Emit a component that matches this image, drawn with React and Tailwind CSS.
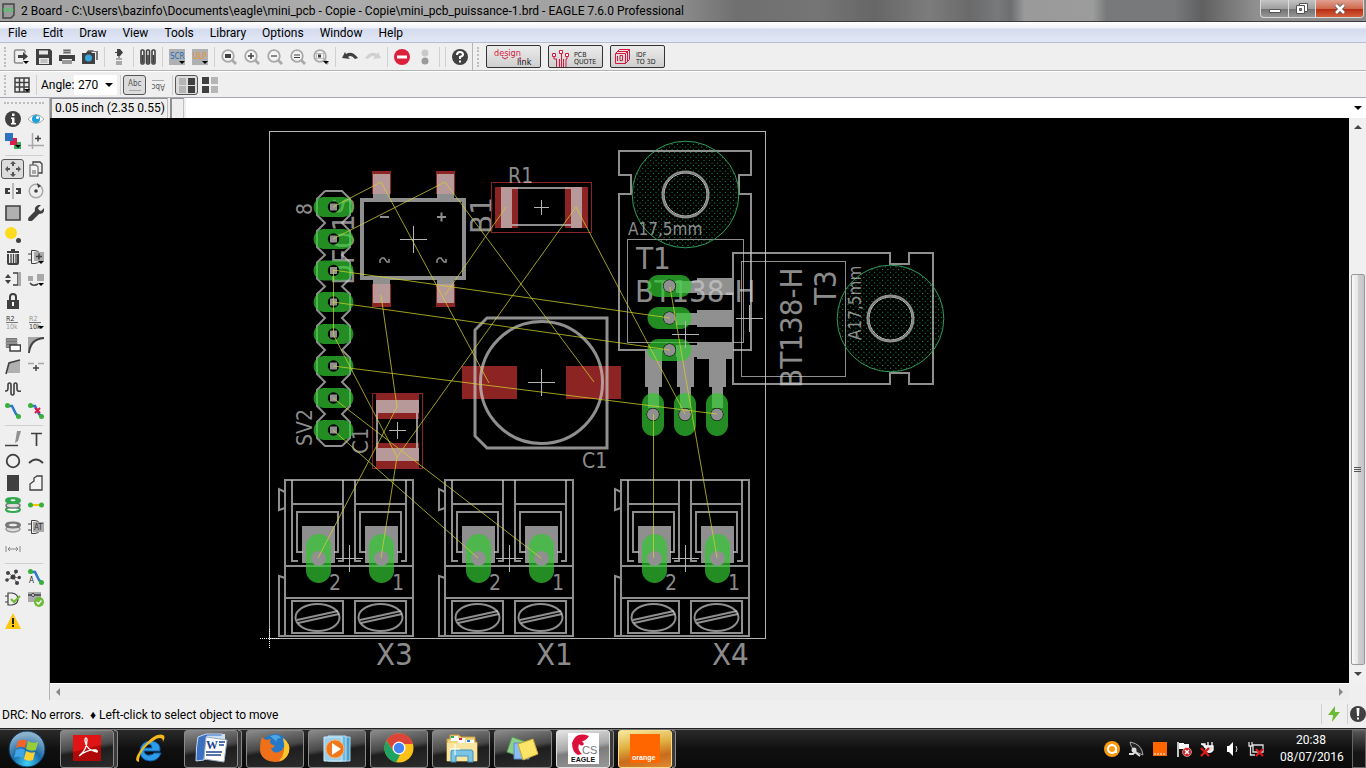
const uiFont = "font-['Roboto','Open_Sans',sans-serif] text-[12px] text-black";

const menus = ['File', 'Edit', 'Draw', 'View', 'Tools', 'Library', 'Options', 'Window', 'Help'];

const D = '#404040';
const G = '#a8a8a8';
const condensed = "'DejaVu Sans Condensed', 'DejaVu Sans', sans-serif";

const Lens = ({ children }) => (
  <>
    <path d="M11 11l4 4" stroke={G} strokeWidth="2.6" />
    <circle cx="7" cy="7" r="5.8" fill="#f4f4f4" stroke={G} strokeWidth="1.8" />
    {children}
  </>
);

const DropMark = () => <path d="M10 12h6l-3 3z" fill="#000" />;

const icons = {
  open: (
    <>
      <path d="M12 4V2.500Q12 1 10.500 1H3Q1.500 1 1.500 2.500v10Q1.500 14 3 14h7" fill="none" stroke="#8a8a8a" strokeWidth="1.500" />
      <path d="M5 6h5V3l5 4.500-5 4V9H5z" fill={D} />
      <DropMark />
    </>
  ),
  save: (
    <>
      <path d="M0 0h14l2 2v14H0z" fill={D} />
      <path d="M3 1.500h9v4H3zM3 9h10v6H3z" fill="#e8e8e8" />
      <path d="M4.500 11h7M4.500 13h7" stroke="#999" />
    </>
  ),
  print: (
    <>
      <path d="M4 0h8v5H4z" fill="#aaa" />
      <path d="M5 1.500h6M5 3.500h6" stroke="#666" />
      <path d="M0 6h16v6h-3v-2H3v2H0z" fill={D} />
      <path d="M3 11h10v4H3z" fill="#999" />
    </>
  ),
  camera: (
    <>
      <path d="M5 3l1-2h5l1 1h4v9h-2V3z" fill="#777" />
      <path d="M0 4h4l1-1.500h4L10 4h3v11H0z" fill={D} />
      <circle cx="6.500" cy="9" r="3.500" fill="#35a7e0" />
    </>
  ),
  plug: (
    <>
      <path d="M6 0v7h3l3-3.500L9 0z" fill={D} />
      <path d="M4 3.500h3M8 6v3" stroke={D} />
      <path d="M5 9h6v2H5zM5 12h6v4H5z" fill={G} />
    </>
  ),
  books: (
    <g fill="#f2f2f2" stroke={D} strokeWidth="1.600">
      <rect x="1" y="1" width="3" height="14" rx="1" />
      <rect x="6.500" y="1" width="3" height="14" rx="1" />
      <rect x="12" y="1" width="3" height="14" rx="1" />
      <path d="M2.500 6v8M8 6v8M13.500 6v8" />
    </g>
  ),
  scr: (
    <>
      <path d="M0 0h16v16H0z" fill="#aeb0b2" />
      <text x="1" y="10" fontSize="8" fontFamily={condensed} fill="#1f6cba">SCR</text>
      <DropMark />
    </>
  ),
  ulp: (
    <>
      <path d="M0 0h16v16H0z" fill="#aeb0b2" />
      <text x="1" y="10" fontSize="8" fontFamily={condensed} fill="#f0901c">ULP</text>
      <DropMark />
    </>
  ),
  zoomFit: <Lens><path d="M4 5h6v4H4z" fill={D} /></Lens>,
  zoomIn: <Lens><path d="M4 7h6M7 4v6" stroke={D} strokeWidth="1.500" /></Lens>,
  zoomOut: <Lens><path d="M4 7h6" stroke={D} strokeWidth="1.200" /></Lens>,
  zoomRedraw: <Lens><path d="M4 6h6M4 8.500h6" stroke={D} /></Lens>,
  zoomSelect: <Lens><path d="M3.500 4.500h7v5h-7z" fill="none" stroke="#888" strokeDasharray="1 1" /><path d="M5 5.500h3v3H5z" fill={D} /><DropMark /></Lens>,
  undo: <path d="M0 9L3 3l1 2q6-4 12 4l-3 1q-4-5-7-2l2 2z" fill={D} />,
  redo: <path d="M16 9l-3-6-1 2Q6 1 0 9l3 1q4-5 7-2l-2 2z" fill="#d0d0d0" />,
  stop: (
    <>
      <circle cx="8" cy="8" r="8" fill="#dc1f3c" />
      <path d="M3 6.500h10v3H3z" fill="#fff" />
    </>
  ),
  light: (
    <>
      <circle cx="8" cy="4" r="3.500" fill="#c9c9c9" />
      <circle cx="8" cy="12" r="3.500" fill="#9a9a9a" />
    </>
  ),
  help: (
    <>
      <circle cx="8" cy="8" r="8" fill={D} />
      <path d="M5 6q0-3 3-3t3 2.500Q11 7 8 8v2" fill="none" stroke="#fff" strokeWidth="2" />
      <path d="M7 11.500h2v2H7z" fill="#fff" />
    </>
  ),
  grid: (
    <>
      <path d="M1 1h14v14H1zM1 5.500h14M1 10h14M5.500 1v14M10 1v14" fill="none" stroke={D} strokeWidth="1.500" />
      <DropMark />
    </>
  ),
  abc: (
    <>
      <text x="1" y="9" fontSize="8" fontFamily={condensed} fill="#555">Abc</text>
      <path d="M2 13.500h12" stroke={G} />
    </>
  ),
  abcFlip: (
    <>
      <text x="1" y="9" fontSize="8" fontFamily={condensed} fill="#555" transform="rotate(180 8 8)">Abc</text>
      <path d="M2 3.500h12" stroke={G} />
    </>
  ),
  quadA: (
    <>
      <path d="M0 1h7v7H0zM0 9h7v7H0z" fill="#b5b5b5" />
      <path d="M9 1h7v7H9zM9 9h7v7H9z" fill={D} />
    </>
  ),
  quadB: (
    <>
      <path d="M9 0h7v7H9zM9 9h7v7H9z" fill="#b5b5b5" />
      <path d="M0 0h7v7H0zM0 9h7v7H0z" fill={D} />
    </>
  ),
  info: (
    <>
      <circle cx="8" cy="8" r="8" fill={D} />
      <path d="M7 2.500h2.500v2.500H7zM6 6.500h3.500V12H11v1.500H6V12h1V8H6z" fill="#fff" />
    </>
  ),
  eye: (
    <>
      <path d="M0 8q8-9 16 0-8 9-16 0z" fill="#fff" stroke={G} />
      <circle cx="8" cy="8" r="4" fill="#1da0dc" />
      <circle cx="9.500" cy="6.500" r="1.500" fill="#fff" />
    </>
  ),
  layers: (
    <>
      <path d="M9 9h7v7H9z" fill="#3aaf5a" />
      <path d="M5 5h7v7H5z" fill="#d81e4a" />
      <path d="M0 0h8v8H0z" fill="#2d72bd" />
      <DropMark />
    </>
  ),
  mark: (
    <>
      <path d="M4.500 0v16M0 12.500h16" stroke={G} strokeWidth="1.500" />
      <path d="M7 5.500h6M10 2.500v6" stroke={D} strokeWidth="1.500" />
    </>
  ),
  move: <path d="M8 0l3 3H9v2H7V3H5zM8 16l3-3H9v-2H7v2H5zM0 8l3-3v2h2v2H3v2zM16 8l-3-3v2h-2v2h2v2z" fill="#555" />,
  copy: (
    <>
      <path d="M5 1h7l2 2v9H5z" fill="#eee" stroke={D} strokeWidth="1.300" />
      <path d="M2 4h6l2 2v9H2z" fill="#f4f4f4" stroke="#777" strokeWidth="1.300" />
      <path d="M4 9h4v4H4z" fill={G} />
    </>
  ),
  mirror: (
    <>
      <path d="M8 0v16" stroke={G} strokeWidth="1.500" />
      <path d="M0 5h5v6H0zM11 5h5v6h-5z" fill={D} />
      <path d="M3 7h2v2H3zM11 7h2v2h-2z" fill="#eee" />
    </>
  ),
  rotate: (
    <>
      <circle cx="8" cy="8" r="6.800" fill="none" stroke={G} strokeWidth="1.500" />
      <circle cx="8" cy="8" r="1.800" fill={D} />
      <path d="M9 0l4 3-3 2z" fill={D} />
    </>
  ),
  group: <path d="M1 1h14v14H1z" fill="#b0b0b0" stroke={D} strokeWidth="1.600" />,
  wrench: <path d="M10 0q3-1 3 0l-3 3 1 2 2 1 3-3q1 6-5 6l-6 6q-3 3-5 0 0-2 1-3l6-6q-1-4 3-6z" fill={D} />,
  paste: (
    <>
      <circle cx="6" cy="6" r="6" fill="#fddb1e" />
      <circle cx="13.500" cy="13.500" r="2.500" fill={D} />
    </>
  ),
  trash: (
    <>
      <path d="M2 3h12M6 1h4M3 5v9q0 1 1 1h8q1 0 1-1V5" fill="none" stroke={D} strokeWidth="2" />
      <path d="M6 5v9M8.500 5v9M11 5v9" stroke={D} strokeWidth="1.300" />
    </>
  ),
  add: (
    <>
      <path d="M3.500 1.500H7q6 1 6 6.500t-6 6.500H3.500zM0 5h3M0 11h3" fill="#eee" stroke={D} />
      <path d="M6 3h10v9H6z" fill="#aaa" />
      <path d="M8 7.500h6M11 4.500v6" stroke={D} strokeWidth="1.500" />
      <DropMark />
    </>
  ),
  pinswap: (
    <>
      <path d="M0 7l3-4 3 4zM0 9l3 4 3-4z" fill={D} />
      <path d="M8 2h5v12H8" fill="none" stroke={D} strokeWidth="1.500" />
      <path d="M13 1h3v14h-3z" fill={G} />
    </>
  ),
  replace: (
    <>
      <path d="M0 5h5v5H0zM9 3h7v7H9z" fill={G} />
      <path d="M2 12q3 4 8 1" fill="none" stroke={D} strokeWidth="1.500" />
      <DropMark />
    </>
  ),
  lock: (
    <>
      <path d="M5 8V4q0-3 3-3t3 3v4" fill="none" stroke={D} strokeWidth="2" />
      <path d="M2 7h12v9H2z" fill={D} />
      <path d="M7 9h2v4H7z" fill="#fff" />
    </>
  ),
  name: (
    <>
      <text x="1" y="6" fontSize="7" fontFamily={condensed} fill="#333">R2</text>
      <path d="M1 7.500h12" stroke="#777" />
      <text x="1" y="14" fontSize="7" fontFamily={condensed} fill="#999">10k</text>
    </>
  ),
  value: (
    <>
      <text x="1" y="6" fontSize="7" fontFamily={condensed} fill="#999">R2</text>
      <path d="M1 7.500h12" stroke="#777" />
      <text x="1" y="14" fontSize="7" fontFamily={condensed} fill="#333">10k</text>
      <path d="M10 11h6l-3 3z" fill="#000" />
    </>
  ),
  smash: (
    <>
      <path d="M1 1h11v10H1z" fill="#777" />
      <path d="M0 3h13M0 6h13M0 9h13" stroke="#aaa" />
      <path d="M5 8h10.500v6H5z" fill="#fff" stroke={D} strokeWidth="1.500" />
    </>
  ),
  miter: (
    <>
      <path d="M0 0h16L6 5 1 16H0z" fill={G} />
      <path d="M1 16Q2 2 16 1" fill="none" stroke={D} strokeWidth="1.800" />
    </>
  ),
  split: (
    <>
      <path d="M4 4l11-2v12H2z" fill="#b0b0b0" />
      <path d="M1 15L4 4l11-3" fill="none" stroke={D} strokeWidth="1.600" />
    </>
  ),
  optimize: (
    <>
      <path d="M0 4.500h6M10 4.500h6" stroke={G} strokeWidth="1.500" />
      <path d="M5 9h6M8 6v6" stroke={D} strokeWidth="1.400" />
    </>
  ),
  meander: <path d="M0 10h1q2 0 2-3V4q0-2 1.500-2T6 4v8q0 2 1.500 2T9 12V4q0-2 1.500-2T12 4v4q0 3 4 2" fill="none" stroke={D} strokeWidth="1.600" />,
  route: (
    <>
      <path d="M2 3h5l4 8 3 3" fill="none" stroke="#2d78c4" strokeWidth="2.500" />
      <circle cx="2.500" cy="2.500" r="2.500" fill="#3aaf3a" />
      <circle cx="13.500" cy="13.500" r="2.500" fill="#3aaf3a" />
    </>
  ),
  ripup: (
    <>
      <path d="M2 3h5l4 8 3 3" fill="none" stroke="#2d78c4" strokeWidth="2.500" />
      <circle cx="2.500" cy="2.500" r="2.500" fill="#3aaf3a" />
      <circle cx="13.500" cy="13.500" r="2.500" fill="#3aaf3a" />
      <path d="M7 5l5 5M12 5L7 10" stroke="#e01840" strokeWidth="2" />
    </>
  ),
  line: (
    <>
      <path d="M0 14.500h13" stroke={D} strokeWidth="1.500" />
      <path d="M12 0h4l-3 10-3 2z" fill="#909090" />
    </>
  ),
  text: <path d="M3 2.500h11M8.500 2.500V15" stroke={D} strokeWidth="1.700" />,
  circle: <circle cx="8" cy="8" r="6.300" fill="none" stroke={D} strokeWidth="1.800" />,
  arc: <path d="M1 10q7-7 14 0" fill="none" stroke={D} strokeWidth="2" />,
  rect: <path d="M2 0h12v16H2z" fill={D} />,
  polygon: <path d="M2 15V9l4-3V3l3-2h5v14z" fill="#f4f4f4" stroke={D} strokeWidth="1.300" />,
  via: (
    <>
      <ellipse cx="8" cy="12.500" rx="7" ry="2.500" fill="#fff" stroke="#2fa84f" strokeWidth="2" />
      <ellipse cx="8" cy="8.500" rx="7" ry="2.500" fill="#ddd" stroke="#777" strokeWidth="1.500" />
      <ellipse cx="8" cy="3.500" rx="7" ry="2.500" fill="#2fa84f" stroke="#2fa84f" strokeWidth="2" />
      <ellipse cx="8" cy="3.300" rx="2.500" ry="1" fill="#e8f6ea" />
    </>
  ),
  signal: (
    <>
      <path d="M3 8h10" stroke="#f5c800" strokeWidth="2" />
      <circle cx="2.500" cy="8" r="2.500" fill="#3aaf3a" />
      <circle cx="13.500" cy="8" r="2.500" fill="#3aaf3a" />
    </>
  ),
  hole: (
    <>
      <ellipse cx="8" cy="10" rx="7" ry="3" fill="#ddd" stroke="#999" strokeWidth="1.500" />
      <ellipse cx="8" cy="6" rx="7" ry="2.500" fill="#888" stroke="#777" strokeWidth="2" />
      <ellipse cx="8" cy="6" rx="4" ry="1.200" fill="#eee" />
    </>
  ),
  attribute: (
    <>
      <path d="M3.500 1.500H7q6 1 6 6.500t-6 6.500H3.500zM0 5h3M0 11h3" fill="#eee" stroke={D} />
      <path d="M5 3h11v10H5z" fill="#aaa" />
      <text x="6" y="11" fontSize="8" fontFamily={condensed} fill="#333">AT</text>
    </>
  ),
  dimension: <path d="M1 5v6M15 5v6M4 8h8M5 6L3 8l2 2M11 6l2 2-2 2" fill="none" stroke="#888" />,
  ratsnest: (
    <>
      <path d="M8 8L3 3M8 8l4-6M8 8l7 1M8 8L2 11M8 8l4 6" stroke="#888" />
      <g fill={D}>
        <circle cx="8" cy="8" r="2.500" />
        <circle cx="3" cy="4" r="2" />
        <circle cx="11" cy="2.500" r="2" />
        <circle cx="14.300" cy="8.500" r="1.700" />
        <circle cx="2" cy="11" r="1.800" />
        <circle cx="12" cy="14" r="2" />
      </g>
    </>
  ),
  auto: (
    <>
      <path d="M2 3h5l4 8 3 3" fill="none" stroke="#2d78c4" strokeWidth="2.500" />
      <circle cx="2.500" cy="2.500" r="2.500" fill="#3aaf3a" />
      <circle cx="13.500" cy="13.500" r="2.500" fill="#3aaf3a" />
      <text x="1" y="14" fontSize="8" fontFamily={condensed} fill="#222">A</text>
    </>
  ),
  erc: (
    <>
      <path d="M3 2h4q6 1 6 6t-6 6H3zM0 5h3M0 11h3" fill="none" stroke={D} strokeWidth="1.200" />
      <path d="M6 8l3 3 6-6" fill="none" stroke="#6cba35" strokeWidth="2.200" />
    </>
  ),
  drc: (
    <>
      <path d="M0 1h13v10H0z" fill="#aaa" />
      <path d="M0 4h13" stroke={D} strokeWidth="1.500" />
      <circle cx="5" cy="4" r="1.500" fill="#eee" stroke={D} />
      <circle cx="11" cy="11" r="5" fill="#6cba35" />
      <path d="M8.500 11l2 2 3-3.500" fill="none" stroke="#fff" strokeWidth="1.500" />
    </>
  ),
  warning: (
    <>
      <path d="M8 0l8 16H0z" fill="#ffc814" />
      <path d="M7 5h2v6H7zM7 12h2v2H7z" fill="#222" />
    </>
  ),
};

const sidebar = [
  ['info', 'eye'],
  ['layers', 'mark'],
  null,
  ['move', 'copy'],
  ['mirror', 'rotate'],
  ['group', 'wrench'],
  ['paste'],
  ['trash', 'add'],
  ['pinswap', 'replace'],
  ['lock'],
  ['name', 'value'],
  ['smash', 'miter'],
  ['split', 'optimize'],
  ['meander'],
  ['route', 'ripup'],
  null,
  ['line', 'text'],
  ['circle', 'arc'],
  ['rect', 'polygon'],
  ['via', 'signal'],
  ['hole', 'attribute'],
  ['dimension'],
  null,
  ['ratsnest', 'auto'],
  ['erc', 'drc'],
  ['warning'],
];

const toolbar = [
  'open', 'save', 'print', 'camera', null, 'plug', null, 'books', null, 'scr', 'ulp', null,
  'zoomFit', 'zoomIn', 'zoomOut', 'zoomRedraw', 'zoomSelect', null, 'undo', 'redo', null,
  'stop', 'light', null, null, 'help',
];

const Tool = ({ name, pressed }) => (
  <button
    type="button"
    aria-label={name}
    className={`flex w-[23px] shrink-0 items-center justify-center ${pressed ? 'h-5 rounded-[3px] border border-[#555] bg-[#dcdcdc]' : 'h-[22px]'}`}
  >
    <svg viewBox="0 0 16 16" className="size-4 shrink-0">{icons[name]}</svg>
  </button>
);

const Sep = () => (
  <div className="flex h-5 w-[6px] shrink-0 justify-center">
    <div className="w-px bg-[#cfcfcf]" />
  </div>
);

const Grip = () => <div className="mx-1 h-5 w-0 shrink-0 border-l-2 border-dotted border-[#bdbdbd]" />;

const TitleBar = () => (
  <header className="flex h-[22px] shrink-0 items-start justify-between border-b border-[#3c3c3c] bg-[linear-gradient(90deg,#a2a2a2_0%,#ababab_25%,#a0a0a0_45%,#8a8a8a_50%,#6f6f6f_54%,#757575_60%,#666_64%,#7c7c7c_68%,#6a6a6a_71%,#77797b_73%,#6c6e70_74%,#9a9a9a_75%,#9c9c9c_80%,#77797b_81%,#77797b_86%,#606060_88%,#909090_92%,#8a8a8a_100%)]">
    <div className="flex min-w-0 items-center pt-[2px] pl-[2px]">
      <svg viewBox="0 0 13 16" className="mr-[6px] h-4 w-[13px] shrink-0">
        <path d="M1 1h11v11l-3 3H1z" fill="#9a9a9a" stroke="#444" strokeWidth="1.500" />
        <text x="1" y="9" fontSize="5" fontFamily="'Liberation Sans', sans-serif" fill="#2fd84f">BRD</text>
      </svg>
      <h1 className="truncate text-[12px] leading-[18px]">
        2 Board - C:\Users\bazinfo\Documents\eagle\mini_pcb - Copie - Copie\mini_pcb_puissance-1.brd - EAGLE 7.6.0 Professional
      </h1>
    </div>
    <div className="mr-[2px] flex h-[18px] shrink-0 overflow-hidden rounded-b border border-t-0 border-[#d8d8d8] bg-[linear-gradient(#c4c4c4,#a0a0a0_50%,#707070_51%,#969696)]">
      <button type="button" aria-label="Minimize" className="flex w-7 items-center justify-center border-r border-[#ddd]">
        <svg viewBox="0 0 12 12" className="size-3"><path d="M.5 6.500h11v3H.500z" fill="#fff" stroke="#555" /></svg>
      </button>
      <button type="button" aria-label="Restore" className="flex w-[27px] items-center justify-center border-r border-[#ddd]">
        <svg viewBox="0 0 12 12" className="size-3">
          <path d="M3.500.5h8v8h-8z" fill="#fff" stroke="#555" />
          <path d="M.5 2.500h8v8h-8z" fill="#fff" stroke="#555" />
          <path d="M3.500 5.500h2v2h-2z" fill="#888" stroke="#555" />
        </svg>
      </button>
      <button type="button" aria-label="Close" className="flex w-[47px] items-center justify-center bg-[linear-gradient(#e0a090,#cf6a50_50%,#b52a10_51%,#d4603c)]">
        <svg viewBox="0 0 12 12" className="size-3">
          <path d="M2 2l8 8M10 2l-8 8" stroke="#555" strokeWidth="4.500" />
          <path d="M2 2l8 8M10 2l-8 8" stroke="#fff" strokeWidth="2.600" />
        </svg>
      </button>
    </div>
  </header>
);

const LinkButton = ({ label, children }) => (
  <button type="button" aria-label={label} className="h-[23px] w-[55px] shrink-0 rounded-[2px] border border-[#333] bg-[linear-gradient(#ececec,#cfcfcf)]">
    <svg viewBox="0 0 53 21" className="h-[21px] w-[53px]">{children}</svg>
  </button>
);

const Toolbars = () => (
  <>
    <div className="flex h-[28px] shrink-0 items-center border-b border-[#b4b4b4]">
      <Grip />
      <div className="-ml-px flex items-center">
        {toolbar.map((name, i) => (name ? <Tool key={i} name={name} /> : <Sep key={i} />))}
      </div>
      <div className="ml-px h-full w-px bg-[#b4b4b4]" />
      <Grip />
      <div className="flex gap-[7px] pl-[3px]">
        <LinkButton label="Design link">
          <g fontFamily={condensed} fontSize="9">
            <text x="7" y="10" fill="#d8173e">design</text>
            <text x="30" y="19" fill="#111">link</text>
          </g>
          <path d="M15 11l3 2 3-2M33 11v5" fill="none" stroke="#d8173e" />
        </LinkButton>
        <LinkButton label="PCB quote">
          <path d="M5 11v2h2.500v8M10.500 21v-8M12.500 21V7M14.500 21v-8M18 11v2h-1v8" fill="none" stroke="#d8173e" />
          <path d="M3.500 7.500h3v3h-3zM10.500 4.500h3v3h-3zM16.500 7.500h3v3h-3z" fill="#fff" stroke="#d8173e" />
          <g fontFamily={condensed} fontSize="7" fill="#222">
            <text x="25" y="11">PCB</text>
            <text x="25" y="18">QUOTE</text>
          </g>
        </LinkButton>
        <LinkButton label="IDF to 3D">
          <path d="M4.500 7.500l4-4h10v10l-4 4h-10zM4.500 7.500h10v10M14.500 7.500l4-4" fill="none" stroke="#d8173e" />
          <path d="M6.500 10v5M9 14.500v-5h2.500v5zM7 5.500h9.500v10" fill="none" stroke="#d8173e" />
          <g fontFamily={condensed} fontSize="7" fill="#222">
            <text x="25" y="11">IDF</text>
            <text x="25" y="18">TO 3D</text>
          </g>
        </LinkButton>
      </div>
    </div>
    <div className="flex h-[27px] shrink-0 items-center border-t border-b border-t-white border-b-[#a8a8b0]">
      <Grip />
      <Tool name="grid" />
      <Sep />
      <label htmlFor="angle" className="w-[35px] pl-[2px] whitespace-nowrap">Angle:</label>
      <div className="relative">
        <select id="angle" defaultValue="270" className="h-5 w-[43px] appearance-none bg-white pl-1 outline-none">
          <option>270</option>
          <option>180</option>
          <option>90</option>
          <option>0</option>
        </select>
        <svg viewBox="0 0 8 4" className="pointer-events-none absolute top-2 right-1 h-1 w-2"><path d="M0 0h8L4 4z" /></svg>
      </div>
      <Sep />
      <Tool name="abc" pressed />
      <Tool name="abcFlip" />
      <Sep />
      <Tool name="quadA" pressed />
      <Tool name="quadB" />
    </div>
  </>
);

const Sidebar = () => (
  <aside className="w-[50px] shrink-0 border-r border-[#b4b4b4] pr-[2px] pl-px">
    <div className="mx-[3px] mt-1 mb-1 border-t-2 border-dotted border-[#bdbdbd]" />
    {sidebar.map((row, i) =>
      row ? (
        <div key={i} className="flex h-[22px] items-center">
          {row.map((name) => <Tool key={name} name={name} pressed={name === 'move'} />)}
        </div>
      ) : (
        <div key={i} className="mx-1 flex h-[6px] items-center"><div className="h-px w-full bg-[#cfcfcf]" /></div>
      )
    )}
  </aside>
);

// board layer colours, all drawn slightly translucent so that overlaps show
const A = 0.706;
const GRAY = '#cbcbcb';
const RED = '#c63333';
const GREEN = '#32c632';
const line = { fill: 'none', stroke: GRAY, strokeOpacity: A, strokeWidth: 2 };
const gray = { fill: GRAY, fillOpacity: A };
const red = { fill: RED, fillOpacity: A };

const Cross = ({ x, y, r = 13 }) => (
  <path d={`M${x - r} ${y + 0.5}h${2 * r + 1}M${x + 0.5} ${y - r}v${2 * r + 1}`} fill="none" stroke="#b4b4b4" />
);

const Label = ({ x, y, size, up, children }) => (
  <text x={x} y={y} fontSize={size} transform={up ? `rotate(-90 ${x} ${y})` : undefined} {...gray}>
    {children}
  </text>
);

const Pad = ({ x, y, w, h, hole }) => (
  <>
    <rect x={x - w / 2} y={y - h / 2} width={w} height={h} rx={Math.min(w, h) / 2} fill={GREEN} fillOpacity={A} />
    {hole === 'square' ? (
      <>
        <circle cx={x} cy={y} r="5.700" fill="#000" />
        <rect x={x - 3.5} y={y - 3.5} width="7" height="7" {...gray} />
      </>
    ) : (
      <>
        {hole === 'ring' && <circle cx={x} cy={y} r="6.500" fill="#000" />}
        <circle cx={x} cy={y} r={hole === 'ring' ? 6 : 7.5} fill="#909090" />
      </>
    )}
  </>
);

const headerY = [207, 239, 270.5, 302, 334, 366, 398, 430];

const headerOutline = () => {
  const left = headerY.map((y) => `L317 ${y - 8}V${y + 8}L325 ${y + 16}`).join('');
  const right = headerY.map((y) => `L350 ${y - 8}V${y + 8}L342 ${y + 16}`).join('');
  return `M325 191${left}H342M325 191H342${right}`;
};

const Terminal = ({ dx, name }) => (
  <g transform={`translate(${dx} 0)`}>
    <path d="M285 480H413V636H285zM285 566H413M285 598H413M285 492L279 489V510L285 508M285 578L279 576V636H285" {...line} />
    {[0, 63].map((d) => (
      <g key={d} transform={`translate(${d} 0)`}>
        <path d="M292 480V561H298M343 480V561H338M292 504H343M303 552H297V512H338V552H334M292 601H343V633H292z" {...line} />
        <ellipse cx="317.500" cy="617.500" rx="22" ry="13.500" {...line} />
        <path d="M297 620L338 611M298 623L339 614" {...line} />
        <rect x="302" y="526" width="33" height="37" {...gray} />
        <Pad x={318.5} y={558.5} w={25} h={49} />
      </g>
    ))}
    <Cross x={349} y={558} />
    <Label x={329} y={590} size={21}>2</Label>
    <Label x={392} y={590} size={21}>1</Label>
    <Label x={376} y={665} size={31}>{name}</Label>
  </g>
);

const Heatsink = ({ x, y }) => (
  <>
    <circle cx={x} cy={y} r="53.300" fill="url(#dots)" stroke="#2f9c56" />
    <circle cx={x} cy={y} r="23" fill="none" stroke="#909090" strokeWidth="2" />
    <circle cx={x} cy={y} r="21.500" fill="none" stroke="#c8c8c8" />
  </>
);

const airwires = [
  [333, 207, 381, 182], [381, 182, 489, 383], [333, 239, 445, 182], [445, 182, 594, 382],
  [506, 207, 445, 295], [576, 207, 397, 457], [576, 207, 685, 414], [333, 270, 670, 318],
  [333, 302, 670, 350], [333, 366, 717, 414], [670, 287, 717, 558],
  [333, 398, 541, 558], [333, 430, 478, 558], [381, 295, 397, 407], [397, 407, 318, 558],
  [397, 457, 381, 558], [333, 334, 397, 457], [333.5, 270, 333.5, 334], [653.5, 414, 653.5, 558],
];

const Board = () => (
  <svg className="block h-full w-full min-w-0 bg-black" fontFamily={condensed} role="img" aria-label="Board layout">
    <defs>
      <pattern id="dots" width="5.330" height="5.330" patternUnits="userSpaceOnUse">
        <rect x="0" y="0" width="1" height="1" fill="#2f9c56" />
        <rect x="2.660" y="2.660" width="1" height="1" fill="#2f9c56" />
      </pattern>
    </defs>
    <g transform="translate(-50 -118)">
      <rect x="269.500" y="131.500" width="496" height="507" fill="none" stroke="#b4b4b4" />
      <path d="M260 638.500H279M269.500 629V648" stroke="#fff" strokeDasharray="1 1" />

      {/* bridge rectifier */}
      {[0, 64].map((d) => (
        <g key={d}>
          <rect x={372 + d} y="171" width="19" height="23" {...red} />
          <rect x={372 + d} y="284" width="19" height="23" {...red} />
          <rect x={373 + d} y="174" width="17" height="24" {...gray} />
          <rect x={373 + d} y="280" width="17" height="23" {...gray} />
        </g>
      ))}
      <rect x="362" y="200" width="102" height="78" {...line} strokeWidth="4" />
      <path d="M380 217H389M437 217H446M441.500 212.500V221.500" {...line} />
      <path d="M380 263V260L382 258H384L387 262H389V259M437 263V260L439 258H441L444 262H446V259" {...line} strokeWidth="1.500" />
      <Cross x={413} y={239} />
      <Label x={492} y={234} size={31} up>B1</Label>
      <Label x={354} y={285} size={30} up>DF01S</Label>

      {/* resistor */}
      <rect x="491.500" y="182.500" width="100" height="50" fill="none" stroke="#8c2424" />
      <rect x="495" y="187" width="23" height="41" {...red} />
      <rect x="565" y="187" width="23" height="41" {...red} />
      <rect x="501" y="187" width="11" height="41" {...gray} />
      <rect x="571" y="187" width="11" height="41" {...gray} />
      <path d="M512 188H571M512 225H571" {...line} />
      <Cross x={541} y={207} r={7} />
      <Label x={508} y={183} size={21}>R1</Label>

      {/* small capacitor */}
      <rect x="372.500" y="393.500" width="50" height="75" fill="none" stroke="#8c2424" />
      <rect x="376" y="394" width="43" height="25" {...red} />
      <rect x="376" y="443" width="43" height="25" {...red} />
      <rect x="376" y="400" width="43" height="13" {...gray} />
      <rect x="376" y="448" width="43" height="13" {...gray} />
      <path d="M377 413V448M417 413V448" {...line} />
      <Cross x={397} y={430} r={8} />
      <Label x={368} y={454} size={22} up>C1</Label>

      {/* electrolytic capacitor */}
      <rect x="462" y="366" width="55" height="33" {...red} />
      <rect x="566" y="366" width="55" height="33" {...red} />
      <path d="M487 318H607V448H487L475 436V330z" {...line} strokeWidth="3" />
      <circle cx="541.500" cy="382.500" r="61" {...line} strokeWidth="3" />
      <Cross x={541} y={382} />
      <Label x={582} y={468} size={21}>C1</Label>

      {/* triacs */}
      <path d="M619 151H751V175H739V194H751V350H619V194H631V175H619z" {...line} />
      <rect x="627.500" y="239.500" width="116" height="103" {...line} strokeWidth="1" />
      <path d="M733 253H890V264H909V253H933V384H909V373H890V384H733z" {...line} />
      <rect x="741.500" y="261.500" width="104" height="115" {...line} strokeWidth="1" />
      <Heatsink x={685.5} y={194.5} />
      <Heatsink x={890.5} y={318.5} />
      <path d="M676 281H697V278H733V295H697V293H676zM676 313H697V310H733V327H697V325H676zM676 345H697V342H733V359H697V357H676z" fill="#909090" />
      <path d="M645 350H662V387H659V408H648V387H645zM677 350H694V387H691V408H680V387H677zM709 350H726V387H723V408H712V387H709z" fill="#909090" />
      <Label x={628} y={235} size={17}>A17,5mm</Label>
      <Label x={636} y={269} size={31}>T1</Label>
      <Label x={635} y={302} size={31}>BT138-H</Label>
      <Label x={861} y={340} size={17} up>A17,5mm</Label>
      <Label x={836} y={305} size={31} up>T3</Label>
      <Label x={802} y={388} size={31} up>BT138-H</Label>
      {[286, 318, 350].map((y) => <Pad key={y} x={669.5} y={y} w={44} h={22} hole="ring" />)}
      {[653, 685, 717].map((x) => <Pad key={x} x={x} y={414.5} w={22} h={43} hole="ring" />)}
      <Cross x={685} y={334} />
      <Cross x={749} y={318} />

      {/* pin header */}
      <path d={headerOutline()} {...line} />
      {headerY.map((y) => <Pad key={y} x={333.5} y={y} w={40} h={20} hole="square" />)}
      <Label x={312} y={446} size={21} up>SV2</Label>
      <Label x={312} y={215} size={21} up>8</Label>

      <Terminal dx={0} name="X3" />
      <Terminal dx={160} name="X1" />
      <Terminal dx={336} name="X4" />

      {airwires.map(([x1, y1, x2, y2], i) => (
        <line key={i} x1={x1} y1={y1} x2={x2} y2={y2} stroke="#d2d232" strokeOpacity="0.750" />
      ))}
    </g>
  </svg>
);

const Workspace = () => (
  <main className="flex min-w-0 flex-1 flex-col">
    <div className="flex h-5 shrink-0 bg-[#efefef]">
      <output className="w-[118px] truncate border-t border-l-2 border-r border-[#909090] border-r-[#c0c0c0] pl-[3px] leading-[19px]">
        0.05 inch (2.35 0.55)
      </output>
      <div className="ml-[2px] w-[14px] border-t border-l-2 border-r border-[#909090] border-r-[#c0c0c0]" />
      <input aria-label="Command line" className="ml-[2px] min-w-0 flex-1 bg-white outline-none" />
      <button type="button" aria-label="Command history" className="flex w-[17px] items-center justify-center bg-white">
        <svg viewBox="0 0 8 4" className="h-1 w-2"><path d="M0 0h8L4 4z" /></svg>
      </button>
    </div>
    <div className="flex min-h-0 flex-1">
      <div className="min-w-0 flex-1"><Board /></div>
      <div className="flex w-[17px] shrink-0 flex-col items-center bg-[#f0f0f0]">
        <svg viewBox="0 0 8 4" className="my-[7px] h-1 w-2 shrink-0"><path d="M0 4h8L4 0z" fill="#444" /></svg>
        <div className="grow-[140]" />
        <div className="flex w-[14px] grow-[388] flex-col items-center justify-center gap-px rounded-[2px] border border-[#999] bg-[linear-gradient(90deg,#f8f8f8,#e4e4e6_50%,#cfd0d4_51%,#c4c5ca)]">
          <div className="h-px w-[7px] bg-[#555]" />
          <div className="h-px w-[7px] bg-[#555]" />
          <div className="h-px w-[7px] bg-[#555]" />
        </div>
        <svg viewBox="0 0 8 4" className="my-[7px] h-1 w-2 shrink-0"><path d="M0 0h8L4 4z" fill="#444" /></svg>
      </div>
    </div>
    <div className="mr-[17px] flex h-[17px] shrink-0 items-center justify-between border-t border-white bg-[#ececec] px-[6px]">
      <svg viewBox="0 0 4 8" className="h-2 w-1"><path d="M4 0v8L0 4z" fill="#888" /></svg>
      <svg viewBox="0 0 4 8" className="h-2 w-1"><path d="M0 0v8l4-4z" fill="#888" /></svg>
    </div>
  </main>
);

const appIcons = {
  reader: (
    <>
      <rect x="4" y="3" width="28" height="26" fill="#b00808" />
      <path d="M4 3h28v10L4 20z" fill="#e01414" />
      <path d="M10 24q8-6 8-16 0-2-1-2t-1 3q1 9 12 11 1-1-1-2-8-1-17 6z" fill="none" stroke="#fff" strokeWidth="1.300" />
    </>
  ),
  ie: (
    <>
      <path d="M25 19H13q1 5 6 4 3 0 4-2h7q-3 8-11 8-10-1-10-10 1-10 11-10 10 1 9 10zM13 16h8q0-4-4-4t-4 4z" fill="#2c9be8" stroke="#0c5fae" />
      <path d="M8 30q-7-1 3-14Q24 0 32 3q3 1 0 7 0-6-7-3Q10 16 8 27z" fill="#f5b81c" />
    </>
  ),
  word: (
    <>
      <path d="M12 2h20v26H9z" fill="#cfe0f5" />
      <path d="M5 5l8-3h16v2H14L11 28l-8 1q0-14 2-24z" fill="#3b6fc0" stroke="#c4daf4" />
      <path d="M13 5l21 3-3 22-20-3z" fill="#fff" stroke="#9ab" />
      <text x="13" y="17" fontSize="12" fontWeight="700" fontFamily="'Liberation Serif', serif" fill="#1d4690">W</text>
      <path d="M26 10h6M26 13h5M13 20h16M13 23h15" stroke="#1d4690" strokeWidth="1.500" />
    </>
  ),
  firefox: (
    <>
      <circle cx="18" cy="15" r="13" fill="#2478c8" />
      <path d="M13 4q8-3 11 2-6 0-4 4z" fill="#4fa8e4" />
      <path d="M5 5q2 3 6 3 1-1 3-1-2 3 0 5l4 2q-1 2-4 2 2 6 8 4 8-4 4-14 8 6 6 14-3 10-14 10Q4 29 3 18q0-8 2-13z" fill="#f0701a" />
      <path d="M26 6q8 6 6 14-3 8-10 9 8-8 4-23z" fill="#fcc72c" />
    </>
  ),
  player: (
    <>
      <path d="M12 5h19v24H12z" fill="#4f9fce" stroke="#a8d8f0" />
      <path d="M9 4h18v25H9z" fill="#70b8e0" stroke="#b8e0f4" />
      <path d="M5 5h18v24H5z" fill="#9bd0ec" stroke="#cbeaf8" />
      <circle cx="16" cy="17" r="9" fill="#f07818" stroke="#fbb070" />
      <path d="M13 11l9 6-9 6z" fill="#fff" />
    </>
  ),
  chrome: (
    <>
      <circle cx="18" cy="16" r="14.500" fill="#fbc116" />
      <path d="M5.500 8.700A14.500 14.500 0 0 1 32 12H18l-5 8z" fill="#dc4437" />
      <path d="M5.400 8.800l7.200 10.700 6.400 3.500-4 7.400A14.500 14.500 0 0 1 5.400 8.800z" fill="#1da362" />
      <circle cx="18" cy="16" r="6.500" fill="#fff" />
      <circle cx="18" cy="16" r="5.200" fill="#4385f5" />
    </>
  ),
  explorer: (
    <>
      <path d="M4 7h3V3h9l2 2h14v5h2v19H4z" fill="#f0d278" stroke="#c8a040" />
      <path d="M8 4h7v5H8zM15 6h7v5h-7zM23 8h8v5h-8z" fill="#fff" />
      <path d="M8 4h3v2H8z" fill="#2fa84f" />
      <path d="M16 6h3v2h-3z" fill="#d22" />
      <path d="M24 8h3v2h-3z" fill="#28c" />
      <path d="M4 11h30v18H4z" fill="#f8e6a0" />
      <path d="M8 30V20q0-2 2-2h18q2 0 2 2v10h-5v-6H13v6z" fill="#7cc4e4" stroke="#3d93c0" />
      <path d="M12 12v11M7 17h10" stroke="#fff" />
    </>
  ),
  notes: (
    <>
      <path d="M7 5l14 5-5 15-14-5z" fill="#8ed08a" stroke="#5a9a5a" />
      <path d="M9 11h15v16H9z" fill="#8cbcf0" stroke="#5a8ac8" />
      <path d="M13 12l15-5 5 15-15 6z" fill="#fbe468" stroke="#c8a830" />
    </>
  ),
  eagle: (
    <>
      <rect x="3" y="1" width="31" height="31" fill="#fff" />
      <path d="M24 4Q11-1 7 11q0 9 6 12l4-1q-5-4-3-10 3 3 5 0l-2-3q4 0 7-5z" fill="#dc1038" />
      <text x="17" y="22" fontSize="11" fontFamily="'Liberation Sans', sans-serif" fill="#777">CS</text>
      <text x="6" y="30" fontSize="7" fontWeight="700" fontFamily="'Liberation Sans', sans-serif" fill="#111">EAGLE</text>
    </>
  ),
  orange: (
    <>
      <rect x="3" y="2" width="30" height="29" fill="#ff6600" />
      <text x="5" y="28" fontSize="7" fontWeight="700" fontFamily="'Liberation Sans', sans-serif" fill="#fff">orange</text>
    </>
  ),
};

const apps = [
  { id: 'reader', frame: 'dark', stack: true },
  { id: 'ie', frame: 'none' },
  { id: 'word', frame: 'dark', stack: true },
  { id: 'firefox', frame: 'dark' },
  { id: 'player', frame: 'dark' },
  { id: 'chrome', frame: 'dark' },
  { id: 'explorer', frame: 'dark' },
  { id: 'notes', frame: 'dark' },
  { id: 'eagle', frame: 'light', stack: true },
  { id: 'orange', frame: 'orange', stack: true },
];

const frames = {
  none: 'border-transparent',
  dark: 'border-[#8a8a8a] bg-[linear-gradient(170deg,#8a8a8a,#484848_45%,#1e1e1e_55%,#2c2c2c)]',
  light: 'border-[#e0e0e0] bg-[linear-gradient(170deg,#e4e4e4,#a8a8a8_45%,#7c7c7c_55%,#989898)]',
  orange: 'border-[#f4dc90] bg-[linear-gradient(170deg,#f8e8a0,#e0b040_40%,#c86c1c_70%,#e08830)]',
};

const trayIcons = [
  <>
    <circle cx="8" cy="8" r="8" fill="#f79a12" />
    <circle cx="8" cy="8" r="4" fill="none" stroke="#fff" strokeWidth="2" />
    <path d="M12 6v6" stroke="#fff" strokeWidth="2" />
  </>,
  <>
    <path d="M2 1q1 9 13 13Q14 3 2 1z" fill="#222" stroke="#aaa" />
    <circle cx="6" cy="9" r="2.500" fill="#ddd" />
    <path d="M1 13h4l2-2 5 4" fill="none" stroke="#ddd" strokeWidth="2" />
  </>,
  <>
    <path d="M1 1h14v14H1z" fill="#ff6600" />
    <path d="M2 13h11" stroke="#fff" strokeDasharray="2 1" />
  </>,
  <>
    <path d="M2 1v15" stroke="#fff" strokeWidth="1.500" />
    <path d="M3 2h5v1h5v7H8V8H3z" fill="#fff" />
    <circle cx="11" cy="11" r="4.500" fill="#d42020" stroke="#fff" strokeWidth=".500" />
    <path d="M9 9l4 4M13 9l-4 4" stroke="#fff" strokeWidth="1.500" />
  </>,
  <>
    <path d="M6 5h7v4q-3 4-7 1zM8 1v4M12 1v4M1 3h4v4" fill="#ddd" stroke="#fff" strokeWidth="1.300" />
    <path d="M1 7l8 8M9 7l-8 8" stroke="#e01818" strokeWidth="2.200" />
  </>,
  <>
    <path d="M3 5h2l4-4v14l-4-4H3z" fill="#fff" />
    <path d="M12 5q2 3 0 6" fill="none" stroke="#ddd" />
  </>,
  <>
    <path d="M5 4h10v7H5zM1 1v4h3V1M2.500 5v9H7" fill="none" stroke="#ddd" strokeWidth="1.300" />
    <path d="M8 8l7 7M15 8l-7 7" stroke="#e01818" strokeWidth="2.200" />
  </>,
];

const Taskbar = () => (
  <nav className="flex h-[39px] shrink-0 border-t border-[#777] bg-[linear-gradient(#2a2a2a,#101010_50%,#0a0a0a)]">
    <button type="button" aria-label="Start" className="flex w-[60px] items-center pl-2">
      <svg viewBox="0 0 38 38" className="size-[38px]">
        <defs>
          <radialGradient id="orb" cx=".5" cy=".9" r=".8">
            <stop offset="0" stopColor="#3ed0f8" />
            <stop offset=".5" stopColor="#1a6aa8" />
            <stop offset="1" stopColor="#8ab0cc" />
          </radialGradient>
        </defs>
        <circle cx="19" cy="19" r="18" fill="url(#orb)" stroke="#0d3450" />
        <path d="M10 11q5-3 9 0l-2 7q-4-3-9 0z" fill="#f0642c" />
        <path d="M20 11q4 3 10 1l-2 8q-5 2-10-1z" fill="#98cc38" />
        <path d="M8 20q5-3 9 0l-2 8q-5-3-9 0z" fill="#3fa4e8" />
        <path d="M18 21q5 3 9 1l-2 8q-5 2-9-1z" fill="#fcd030" />
      </svg>
    </button>
    {apps.map(({ id, frame, stack }) => (
      <div key={id} className="flex w-[62px] shrink-0">
        <button
          type="button"
          aria-label={id}
          className={`flex items-center justify-center rounded-[3px] border ${stack || frame === 'none' ? 'w-[54px]' : 'w-[58px]'} ${frames[frame]}`}
        >
          <svg viewBox="0 0 36 34" className="h-[34px] w-9">{appIcons[id]}</svg>
        </button>
        {stack && <div className="w-1 rounded-r-[3px] border border-l-0 border-[#8a8a8a] bg-[#3a3a3a]" />}
      </div>
    ))}
    <div className="ml-auto flex items-center gap-2 pr-4">
      {trayIcons.map((icon, i) => (
        <svg key={i} viewBox="0 0 16 16" className="size-4">{icon}</svg>
      ))}
    </div>
    <time className="flex w-[62px] flex-col justify-center text-center leading-[17px] text-white">
      <span>20:38</span>
      <span>08/07/2016</span>
    </time>
    <button type="button" aria-label="Show desktop" className="ml-[10px] w-[14px] border border-[#666] bg-[linear-gradient(#555,#151515_60%)]" />
  </nav>
);

const App = () => (
  <div className={`flex h-screen flex-col overflow-hidden bg-[#efefef] ${uiFont}`}>
    <TitleBar />
    <nav className="flex h-[21px] shrink-0 items-center border-b border-[#b8bcd0] bg-[linear-gradient(#ffffff,#eef1f8_30%,#d4dbed_35%,#e2e8f6)] pt-[2px]">
      {menus.map((m) => <button key={m} type="button" className="px-2">{m}</button>)}
    </nav>
    <Toolbars />
    <div className="flex min-h-0 flex-1">
      <Sidebar />
      <Workspace />
    </div>
    <footer className="flex h-[29px] shrink-0 items-center justify-between border-b border-[#222] pl-[2px]">
      <p className="pt-px whitespace-pre">DRC: No errors.  ♦ Left-click to select object to move</p>
      <div className="flex items-center">
        <Sep />
        <svg viewBox="0 0 16 16" className="mx-[2px] size-4"><path d="M9 0L2 9h5l-1 7 8-10H9z" fill="#6cba35" /></svg>
        <Sep />
        <svg viewBox="0 0 16 16" className="size-4">
          <circle cx="8" cy="8" r="8" fill={D} />
          <path d="M6.500 2h3L9 10H7zM7 11.500h2v2H7z" fill="#fff" />
        </svg>
      </div>
    </footer>
    <Taskbar />
  </div>
);

export default App;
